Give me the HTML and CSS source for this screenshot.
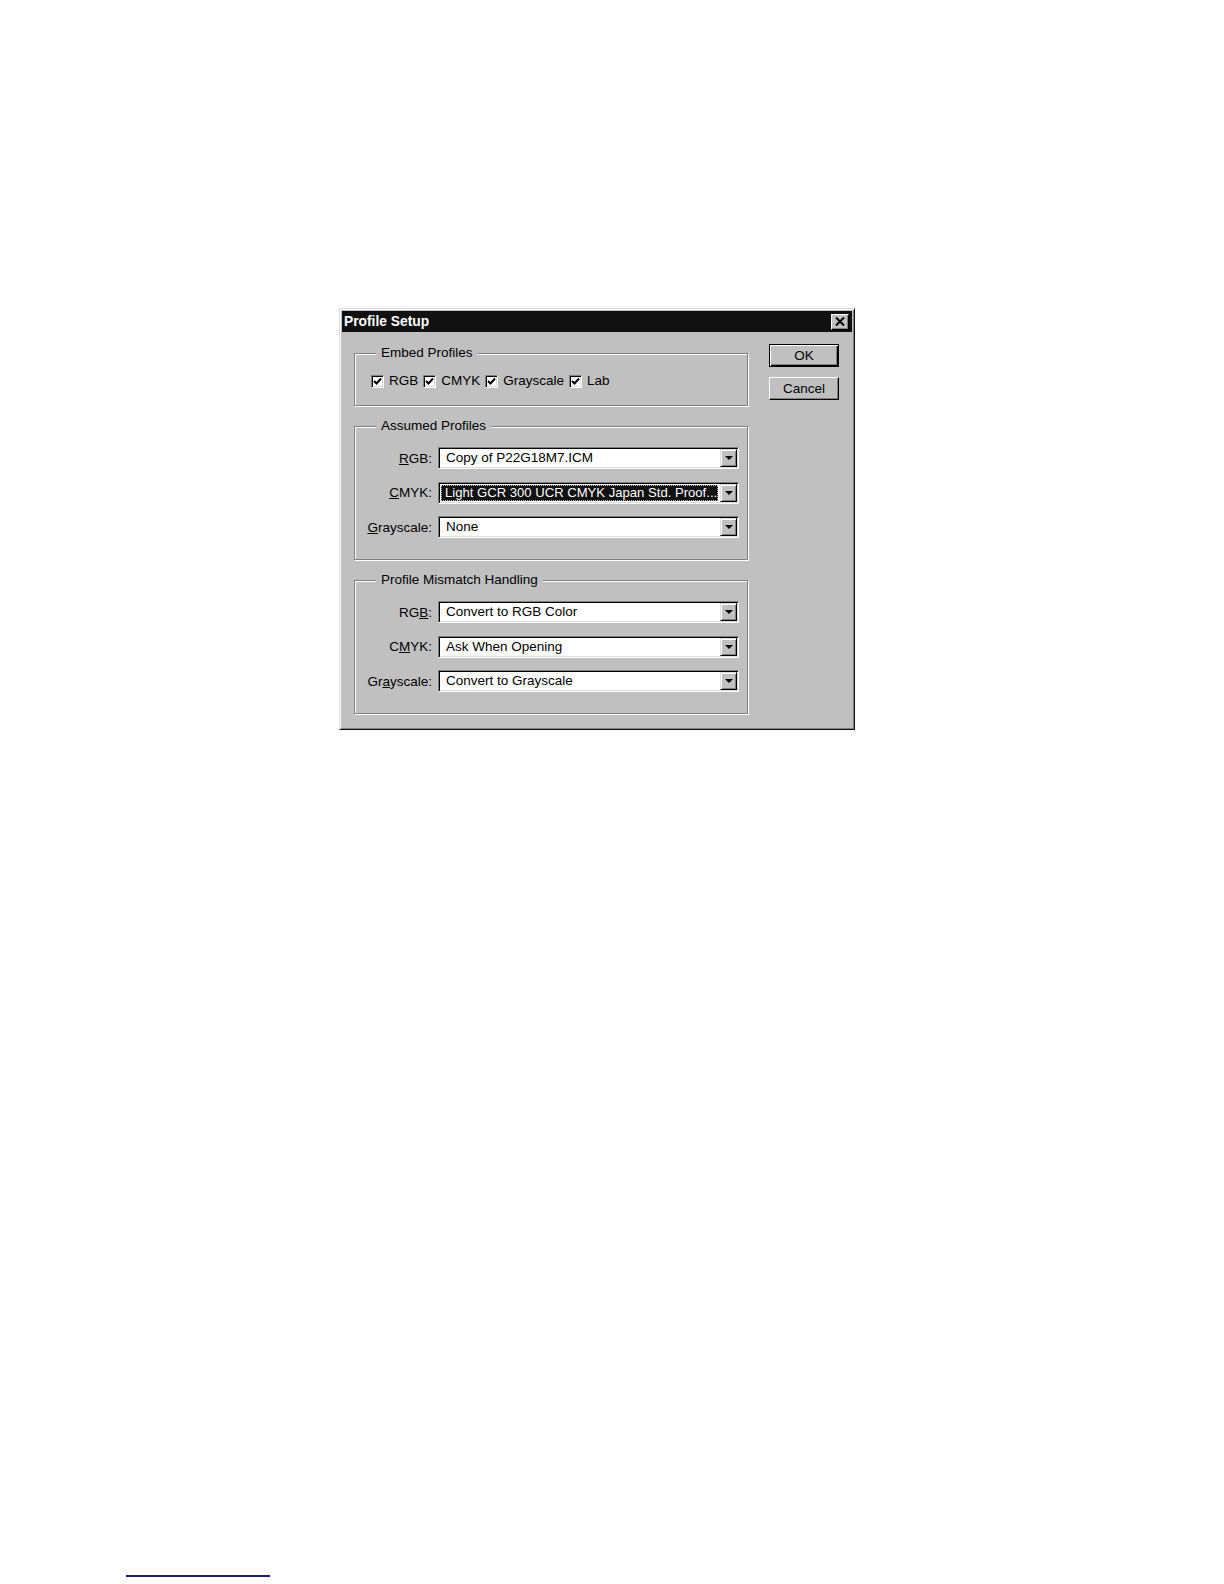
FILE: index.html
```html
<!DOCTYPE html>
<html>
<head>
<meta charset="utf-8">
<title>Profile Setup</title>
<link rel="stylesheet" href="styles.css">
</head>
<body>
<div class="page">
  <div class="dialog">
    <div class="titlebar">
      <span class="title">Profile Setup</span>
      <span class="close-btn"><svg width="10" height="9" viewBox="0 0 10 9"><path d="M1 0.5 L9 8.5 M9 0.5 L1 8.5" stroke="#000" stroke-width="2"/></svg></span>
    </div>
    <div class="dialog-body">
      <div class="groups">
        <fieldset class="group group-embed">
          <legend>Embed Profiles</legend>
          <div class="check-row">
            <span class="check-item"><span class="checkbox"><svg width="9" height="9" viewBox="0 0 9 9"><path d="M1 4 L3.5 6.5 L8 1.5" stroke="#000" stroke-width="2" fill="none"/></svg></span><span>RGB</span></span>
            <span class="check-item"><span class="checkbox"><svg width="9" height="9" viewBox="0 0 9 9"><path d="M1 4 L3.5 6.5 L8 1.5" stroke="#000" stroke-width="2" fill="none"/></svg></span><span>CMYK</span></span>
            <span class="check-item"><span class="checkbox"><svg width="9" height="9" viewBox="0 0 9 9"><path d="M1 4 L3.5 6.5 L8 1.5" stroke="#000" stroke-width="2" fill="none"/></svg></span><span>Grayscale</span></span>
            <span class="check-item"><span class="checkbox"><svg width="9" height="9" viewBox="0 0 9 9"><path d="M1 4 L3.5 6.5 L8 1.5" stroke="#000" stroke-width="2" fill="none"/></svg></span><span>Lab</span></span>
          </div>
        </fieldset>

        <fieldset class="group group-rows">
          <legend>Assumed Profiles</legend>
          <div class="field-row">
            <span class="row-label"><u>R</u>GB:</span>
            <div class="combo"><span class="combo-text">Copy of P22G18M7.ICM</span><span class="combo-btn"><svg width="8" height="4" viewBox="0 0 8 4"><path d="M0 0 H8 L4 4 Z" fill="#000"/></svg></span></div>
          </div>
          <div class="field-row">
            <span class="row-label"><u>C</u>MYK:</span>
            <div class="combo"><span class="combo-text selected">Light GCR 300 UCR CMYK Japan Std. Proof...</span><span class="combo-btn"><svg width="8" height="4" viewBox="0 0 8 4"><path d="M0 0 H8 L4 4 Z" fill="#000"/></svg></span></div>
          </div>
          <div class="field-row">
            <span class="row-label"><u>G</u>rayscale:</span>
            <div class="combo"><span class="combo-text">None</span><span class="combo-btn"><svg width="8" height="4" viewBox="0 0 8 4"><path d="M0 0 H8 L4 4 Z" fill="#000"/></svg></span></div>
          </div>
        </fieldset>

        <fieldset class="group group-rows">
          <legend>Profile Mismatch Handling</legend>
          <div class="field-row">
            <span class="row-label">RG<u>B</u>:</span>
            <div class="combo"><span class="combo-text">Convert to RGB Color</span><span class="combo-btn"><svg width="8" height="4" viewBox="0 0 8 4"><path d="M0 0 H8 L4 4 Z" fill="#000"/></svg></span></div>
          </div>
          <div class="field-row">
            <span class="row-label">C<u>M</u>YK:</span>
            <div class="combo"><span class="combo-text">Ask When Opening</span><span class="combo-btn"><svg width="8" height="4" viewBox="0 0 8 4"><path d="M0 0 H8 L4 4 Z" fill="#000"/></svg></span></div>
          </div>
          <div class="field-row">
            <span class="row-label">Gr<u>a</u>yscale:</span>
            <div class="combo"><span class="combo-text">Convert to Grayscale</span><span class="combo-btn"><svg width="8" height="4" viewBox="0 0 8 4"><path d="M0 0 H8 L4 4 Z" fill="#000"/></svg></span></div>
          </div>
        </fieldset>
      </div>
      <div class="buttons">
        <div class="btn btn-default"><span class="btn-inner">OK</span></div>
        <div class="btn"><span class="btn-inner">Cancel</span></div>
      </div>
    </div>
  </div>
  <div class="footnote-rule"></div>
</div>
</body>
</html>
```

FILE: styles.css
```css
html, body {
  margin: 0;
  padding: 0;
  background: #ffffff;
}

body {
  font-family: "Liberation Sans", Arial, sans-serif;
  font-size: 13.5px;
  color: #000;
}

.page {
  padding-top: 308px;
}

.dialog {
  margin-left: 339px;
  width: 516px;
  box-sizing: border-box;
  background: #c0c0c0;
  border: 1px solid;
  border-color: #dcdcdc #111 #111 #dcdcdc;
  box-shadow: inset 1px 1px 0 #fff, inset -1px -1px 0 #808080;
  padding: 2px;
}

.titlebar {
  height: 21px;
  background: #111;
  display: flex;
  align-items: center;
  justify-content: space-between;
  padding: 0 3px 0 2px;
}

.title {
  color: #fff;
  font-weight: bold;
  font-size: 13.8px;
  line-height: 21px;
}

.close-btn {
  width: 18px;
  height: 16px;
  box-sizing: border-box;
  background: #c0c0c0;
  border: 1px solid;
  border-color: #fff #000 #000 #fff;
  box-shadow: inset -1px -1px 0 #808080;
  display: flex;
  align-items: center;
  justify-content: center;
}

.dialog-body {
  display: flex;
  align-items: flex-start;
  padding: 12px 13px 13px 12px;
}

.groups {
  width: 394px;
  display: flex;
  flex-direction: column;
  gap: 12px;
  margin-top: 1px;
}

.group {
  margin: 0;
  box-sizing: border-box;
  width: 394px;
  min-width: 0;
  border: 1px solid #808080;
  box-shadow: 1px 1px 0 #fff, inset 1px 1px 0 #fff;
}

.group legend {
  margin-left: 17px;
  padding: 0 5px;
  line-height: 16px;
  height: 16px;
  background: #c0c0c0;
}

.group-embed {
  padding: 12px 8px 16px 4px;
}

.check-row {
  display: flex;
  align-items: center;
  height: 16px;
  margin-left: 12px;
}

.check-item {
  display: flex;
  align-items: center;
  margin-right: 5px;
  line-height: 16px;
}

.checkbox {
  width: 13px;
  height: 13px;
  box-sizing: border-box;
  background: #fff;
  border: 1px solid;
  border-color: #808080 #fff #fff #808080;
  box-shadow: inset 1px 1px 0 #000, inset -1px -1px 0 #dcdcdc;
  margin-right: 5px;
  display: flex;
  align-items: center;
  justify-content: center;
}

.group-rows {
  padding: 13px 8px 21px 4px;
  display: flex;
  flex-direction: column;
  gap: 12.5px;
}

.field-row {
  display: flex;
  align-items: center;
  height: 22px;
}

.row-label {
  flex: 1;
  text-align: right;
  padding-right: 6px;
  white-space: nowrap;
}

.combo {
  width: 301px;
  height: 22px;
  box-sizing: border-box;
  display: flex;
  background: #fff;
  border: 1px solid;
  border-color: #808080 #fff #fff #808080;
  box-shadow: inset 1px 1px 0 #000, inset -1px -1px 0 #dcdcdc;
  padding: 1px;
}

.combo-text {
  flex: 1;
  padding-left: 6px;
  line-height: 18px;
  white-space: nowrap;
  overflow: hidden;
}

.combo-text.selected {
  background: #111;
  color: #fff;
  margin: 1px 2px 1px 1px;
  padding-left: 4px;
  line-height: 16px;
  font-size: 13.1px;
  outline: 1px dotted #bbb;
  outline-offset: -1px;
}

.combo-btn {
  width: 17px;
  height: 18px;
  box-sizing: border-box;
  background: #c0c0c0;
  border: 1px solid;
  border-color: #dcdcdc #000 #000 #dcdcdc;
  box-shadow: inset 1px 1px 0 #fff, inset -1px -1px 0 #808080;
  display: flex;
  align-items: center;
  justify-content: center;
}

.buttons {
  margin-left: 21px;
  display: flex;
  flex-direction: column;
  gap: 10px;
}

.btn {
  width: 70px;
  height: 23px;
  box-sizing: border-box;
  background: #c0c0c0;
  border: 1px solid;
  border-color: #fff #000 #000 #fff;
  box-shadow: inset -1px -1px 0 #808080;
  display: flex;
  align-items: center;
  justify-content: center;
}

.btn-default {
  border: 1px solid #000;
  box-shadow: inset 1px 1px 0 #fff, inset -1px -1px 0 #000, inset -2px -2px 0 #808080;
}

.btn-inner {
  line-height: 16px;
}

.footnote-rule {
  margin-left: 126px;
  margin-top: 845px;
  width: 144px;
  height: 2px;
  background: #1c1c80;
}
```
